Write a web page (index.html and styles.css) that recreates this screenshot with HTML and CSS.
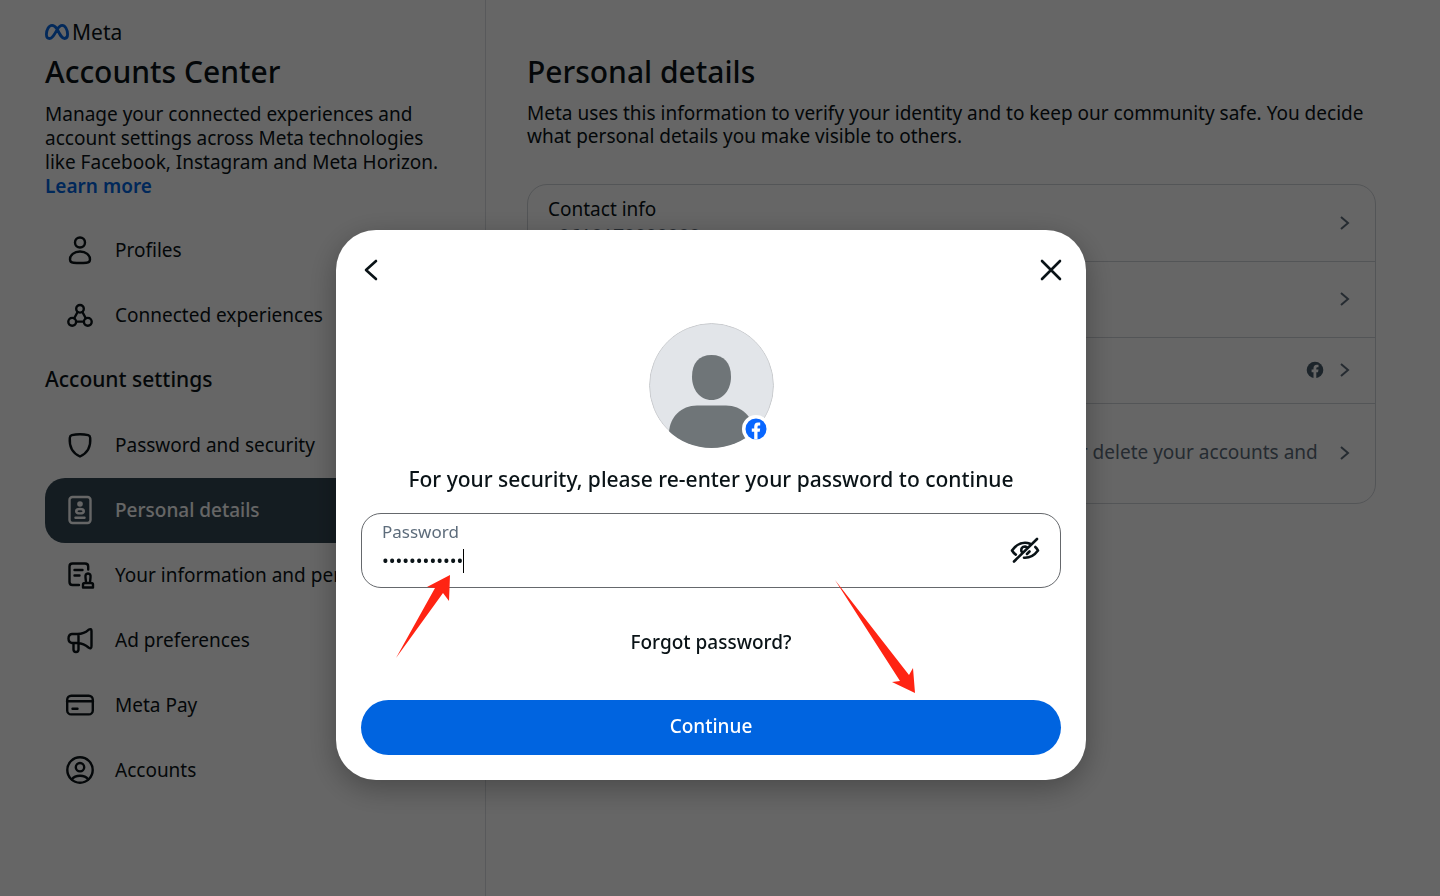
FILE: index.html
```html
<!DOCTYPE html>
<html lang="en">
<head>
    <meta charset="UTF-8">
    <meta name="viewport" content="width=device-width, initial-scale=1"/>
    <title>Accounts Center</title>
    <link rel="stylesheet" href="styles.css">
</head>
<body>
<div class="page">
    <aside class="sidebar">
        <div class="brand">
            <svg class="brand-logo" viewBox="0 0 24 16" fill="none" stroke="#0866e0" stroke-width="2.8">
                <path d="M12 5C10.300 2.500 8.800 1.400 7 1.400C3.800 1.400 1.400 6 1.400 10.200C1.400 13 2.600 14.500 4.600 14.500C7 14.500 8.600 12 12 5.800C14 2.600 15.600 1.400 17.200 1.400C20.200 1.400 22.600 5.800 22.600 10.300C22.600 13 21.400 14.500 19.500 14.500C17.200 14.500 15.600 12 12 5Z"/>
            </svg>
            <span>Meta</span>
        </div>
        <h1>Accounts Center</h1>
        <p class="intro">Manage your connected experiences and account settings across Meta technologies like Facebook, Instagram and Meta Horizon. <a href="#">Learn more</a></p>
        <nav>
            <a class="item" href="#">
                <svg class="icon" viewBox="0 0 30 30">
                    <circle cx="15" cy="7.500" r="5"/>
                    <path d="M15 16.500C9 16.500 5 20.200 5 24.400C5 26.800 6.400 27.500 8.500 27.700Q15 28.300 21.500 27.700C23.600 27.500 25 26.800 25 24.400C25 20.200 21 16.500 15 16.500Z"/>
                </svg>
                Profiles
            </a>
            <a class="item" href="#">
                <svg class="icon" viewBox="0 0 30 30">
                    <circle cx="15" cy="8.800" r="3.800"/>
                    <circle cx="7.200" cy="21.800" r="3.900"/>
                    <circle cx="22.800" cy="21.800" r="3.900"/>
                    <path d="M12.600 12L9.200 18.300M17.400 12L20.800 18.300M11.200 21.600H18.800"/>
                </svg>
                Connected experiences
            </a>
            <h2>Account settings</h2>
            <a class="item" href="#">
                <svg class="icon" viewBox="0 0 30 30">
                    <path d="M15 4.200Q19.500 4.200 23.200 5.200Q25 5.800 25.200 7.800C26 17.500 22.500 23 15 26.500C7.500 23 4 17.500 4.800 7.800Q5 5.800 6.800 5.200Q10.500 4.200 15 4.200Z"/>
                </svg>
                Password and security
            </a>
            <a class="item active" href="#">
                <svg class="icon" viewBox="0 0 30 30">
                    <rect x="4.500" y="2" width="21" height="26" rx="3"/>
                    <circle class="solid" cx="15" cy="9" r="2.800"/>
                    <ellipse cx="15" cy="16.200" rx="3.800" ry="2.200"/>
                    <path d="M10.500 22.700H19.500"/>
                </svg>
                Personal details
            </a>
            <a class="item" href="#">
                <svg class="icon" viewBox="0 0 30 30">
                    <path d="M14 25H7.500Q4.500 25 4.500 22V6.500Q4.500 3.500 7.500 3.500H20Q23.200 3.500 23.200 6.500V9.500M9.500 10H17.500M9.500 15.500H14.500M18 27.500V24.500Q18 23 20 23H26Q28 23 28 24.500V27.500ZM21 22.500L20.500 17.500Q20 13.500 23 13.500Q26 13.500 25.500 17.500L25 22.500"/>
                </svg>
                Your information and permissions
            </a>
            <a class="item" href="#">
                <svg class="icon" viewBox="0 0 30 30">
                    <path d="M12.500 9H7Q3.500 9.500 3.500 13.500Q3.500 17.500 7 18H12.500Q19 18.500 23.500 22.500Q26.500 24.500 26.500 21V6Q26.500 3 23.500 4.800Q19 8.800 12.500 9ZM13.500 9V18M8.500 18V24.500Q8.500 27 11 27Q13.500 27 13.500 24.500V18"/>
                </svg>
                Ad preferences
            </a>
            <a class="item" href="#">
                <svg class="icon" viewBox="0 0 30 30">
                    <rect x="2.200" y="5.800" width="25.600" height="18.600" rx="4"/>
                    <path d="M2 11.200H28M7.500 18.700H12.500"/>
                </svg>
                Meta Pay
            </a>
            <a class="item" href="#">
                <svg class="icon" viewBox="0 0 30 30">
                    <circle cx="15" cy="15" r="12.700"/>
                    <circle cx="15" cy="12.200" r="4.200"/>
                    <path d="M6.800 24.500Q9.500 20.800 15 20.800Q20.500 20.800 23.200 24.500"/>
                </svg>
                Accounts
            </a>
        </nav>
    </aside>
    <main>
        <h1>Personal details</h1>
        <p class="intro">Meta uses this information to verify your identity and to keep our community safe. You decide what personal details you make visible to others.</p>
        <div class="list">
            <a class="row tall" href="#">
                <span class="label">
                    Contact info
                    <span class="sub">+8618178888888</span>
                </span>
                <svg class="chevron" viewBox="0 0 10 16"><path d="M1 2L8 8L1 14"/></svg>
            </a>
            <a class="row tall" href="#">
                <span class="label">Birthday</span>
                <svg class="chevron" viewBox="0 0 10 16"><path d="M1 2L8 8L1 14"/></svg>
            </a>
            <a class="row" href="#">
                <span class="label">Identity confirmation</span>
                <svg class="fb-small" viewBox="0 0 20 20">
                    <circle cx="10" cy="10" r="8.300"/>
                    <path d="M8.500 19V12.300H6.600V9.600H8.500V8.300Q8.500 4.800 11.800 4.800H13.500V7.300H12.300Q11.300 7.300 11.300 8.400V9.600H13.500L13 12.300H11.300V19Z"/>
                </svg>
                <svg class="chevron" viewBox="0 0 10 16"><path d="M1 2L8 8L1 14"/></svg>
            </a>
            <a class="row" href="#">
                <span class="label">
                    Account ownership and control
                    <span class="sub">Manage your data, modify your legacy contact, deactivate or delete your accounts and profiles.</span>
                </span>
                <svg class="chevron" viewBox="0 0 10 16"><path d="M1 2L8 8L1 14"/></svg>
            </a>
        </div>
    </main>
</div>

<div class="overlay">
    <form class="modal" role="dialog" aria-labelledby="modal-title">
        <div class="modal-bar">
            <button type="button" class="icon-button" aria-label="Back">
                <svg viewBox="0 0 24 24"><path d="M17 3L7 12L17 21"/></svg>
            </button>
            <button type="button" class="icon-button" aria-label="Close">
                <svg viewBox="0 0 24 24"><path d="M3 3L21 21M21 3L3 21"/></svg>
            </button>
        </div>
        <div class="avatar">
            <svg viewBox="0 0 125 125">
                <defs>
                    <clipPath id="round"><circle cx="62.500" cy="62.500" r="62.500"/></clipPath>
                </defs>
                <g clip-path="url(#round)">
                    <circle cx="62.500" cy="62.500" r="62" fill="#e2e5e9" stroke="#c9cbce"/>
                    <path fill="#6f7578" d="M62.500 32C75 32 82 40 82 53.500C82 67 74 77 62.500 77C51 77 43 67 43 53.500C43 40 50 32 62.500 32Z"/>
                    <path fill="#6f7578" d="M20 109C21 94 32 82.500 48 82.500H77C93 82.500 104 94 105 109V125H20Z"/>
                </g>
            </svg>
            <svg class="badge" viewBox="0 0 28 28">
                <circle cx="14" cy="14" r="14" fill="#fff"/>
                <circle cx="14" cy="14" r="10.500" fill="#0866ff"/>
                <path fill="#fff" d="M12.200 24.500V16.800H9.800V13.600H12.200V12Q12.200 7.600 16 7.600H18.200V10.600H16.900Q15.500 10.600 15.500 12V13.600H18.200L17.700 16.800H15.500V24.500Z"/>
            </svg>
        </div>
        <h2 id="modal-title">For your security, please re-enter your password to continue</h2>
        <div class="field">
            <div class="field-text">
                <label for="password">Password</label>
                <input type="password" id="password" value="abcdefghijkl">
                <span class="caret"></span>
            </div>
            <button type="button" class="icon-button eye" aria-label="Show password">
                <svg viewBox="0 0 30 28">
                    <path d="M5.800 17.600Q3.500 16 2 13.500Q7.500 5.800 15 5.800Q17.800 5.800 20 6.800M25.300 10Q27 11.500 28 13.500Q22.500 20.800 15 20.800L14 20.700M11.500 14.500Q10.500 9.800 15 9.500L16.500 10M17 17L19.500 14.500M27 2L4 24.500"/>
                </svg>
            </button>
        </div>
        <a class="forgot" href="#">Forgot password?</a>
        <button type="submit" class="continue">Continue</button>
        <svg class="arrow arrow-field" viewBox="0 0 55 84"><path d="M54 0L31 12L39 13L0 83L47 18L53 26Z"/></svg>
        <svg class="arrow arrow-button" viewBox="0 0 82 113"><path d="M0 0L65 101L57 102L80 113L78 88L74 95Z"/></svg>
    </form>
</div>
</body>
</html>
```
FILE: styles.css
```css
* {
    box-sizing: border-box;
}

body {
    margin: 0;
    background: #fff;
    color: #0a1317;
    font-family: "Noto Sans", sans-serif;
    font-size: 19px;
    line-height: 24px;
}

h1, h2, p {
    margin: 0;
}

h1 {
    font-size: 30px;
    font-weight: 500;
    line-height: 36px;
}

h2 {
    font-size: 21px;
    font-weight: 500;
    line-height: 28px;
}

a {
    color: inherit;
    text-decoration: none;
}

button {
    font: inherit;
    border: 0;
    cursor: pointer;
}

svg {
    display: block;
    flex: none;
}

.page {
    display: flex;
    min-height: 100vh;
}

.sidebar {
    flex: none;
    width: 486px;
    padding: 20px 40px 20px 45px;
    border-right: 1px solid #dcdfe3;
}

.brand {
    display: flex;
    align-items: center;
    gap: 3px;
    margin-bottom: 10px;
    font-size: 21px;
}

.brand-logo {
    width: 24px;
    height: 16px;
}

.intro {
    margin-top: 12px;
}

.intro a {
    color: #0064e0;
    font-weight: 600;
}

nav {
    margin-top: 20px;
}

nav h2 {
    padding: 17px 0 20px;
}

.item {
    display: flex;
    align-items: center;
    gap: 20px;
    height: 65px;
    padding: 0 20px 2px;
    border-radius: 20px;
    white-space: nowrap;
}

.item.active {
    background: #344854;
    color: #fff;
    font-weight: 500;
}

.icon {
    width: 30px;
    height: 30px;
    fill: none;
    stroke: currentColor;
    stroke-width: 2.4;
    stroke-linecap: round;
    stroke-linejoin: round;
}

.icon .solid {
    fill: currentColor;
    stroke: none;
}

main {
    flex: 1;
    padding: 54px 64px 40px 41px;
}

main .intro {
    line-height: 23px;
}

.list {
    margin-top: 36px;
    border: 1px solid #d0d4d9;
    border-radius: 20px;
}

.row {
    display: flex;
    align-items: center;
    min-height: 66px;
    padding: 8px 25px 9px 20px;
}

.row.tall {
    min-height: 76px;
}

.row + .row {
    border-top: 1px solid #d0d4d9;
}

.label {
    flex: 1;
    padding-right: 20px;
    line-height: 26px;
}

.sub {
    display: block;
    color: #5d6c7b;
    line-height: 28px;
}

.chevron {
    width: 10px;
    height: 16px;
    fill: none;
    stroke: #5d6c7b;
    stroke-width: 2;
}

.fb-small {
    width: 20px;
    height: 20px;
    margin-right: 15px;
    fill: #465a69;
}

.fb-small path {
    fill: #fff;
}

.overlay {
    position: fixed;
    inset: 0;
    display: flex;
    justify-content: center;
    align-items: flex-start;
    padding: 230px 18px 0 0;
    background: rgba(0, 0, 0, .6);
}

.modal {
    position: relative;
    display: flex;
    flex-direction: column;
    align-items: center;
    width: 750px;
    padding: 20px 25px 25px;
    border-radius: 40px;
    background: #fff;
    box-shadow: 0 8px 30px rgba(0, 0, 0, .3);
}

.modal-bar {
    display: flex;
    justify-content: space-between;
    align-self: stretch;
    margin: 0 -10px;
}

.icon-button {
    display: grid;
    place-items: center;
    width: 40px;
    height: 40px;
    padding: 0;
    background: none;
}

.icon-button svg {
    width: 24px;
    height: 24px;
    fill: none;
    stroke: #0a1317;
    stroke-width: 2.6;
    stroke-linecap: round;
    stroke-linejoin: round;
}

.avatar {
    position: relative;
    width: 125px;
    height: 125px;
    margin: 33px 0 17px;
}

.badge {
    position: absolute;
    right: 4px;
    bottom: 5px;
    width: 28px;
    height: 28px;
}

.field {
    display: flex;
    align-items: center;
    align-self: stretch;
    height: 75px;
    margin-top: 20px;
    padding: 0 15px 0 20px;
    border: 1px solid #65686c;
    border-radius: 20px;
}

.field-text {
    position: relative;
    flex: 1;
    display: flex;
    flex-direction: column;
    padding-bottom: 6px;
}

.field label {
    color: #5d6c7b;
    font-size: 17px;
}

.field input {
    width: 100%;
    height: 32px;
    padding: 0;
    border: 0;
    outline: 0;
    background: none;
    color: #0a1317;
    font: inherit;
    font-size: 18px;
}

.caret {
    position: absolute;
    left: 81px;
    bottom: 9px;
    width: 1px;
    height: 24px;
    background: #000;
}

.eye svg {
    width: 30px;
    height: 28px;
}

.forgot {
    margin: 42px 0 46px;
    font-weight: 500;
}

.continue {
    align-self: stretch;
    height: 55px;
    padding-bottom: 4px;
    border-radius: 28px;
    background: #0064e0;
    color: #fff;
    font-weight: 500;
}

.arrow {
    position: absolute;
    fill: #ff2413;
}

.arrow-field {
    left: 60px;
    top: 345px;
    width: 55px;
    height: 84px;
}

.arrow-button {
    left: 499px;
    top: 350px;
    width: 82px;
    height: 113px;
}
```
